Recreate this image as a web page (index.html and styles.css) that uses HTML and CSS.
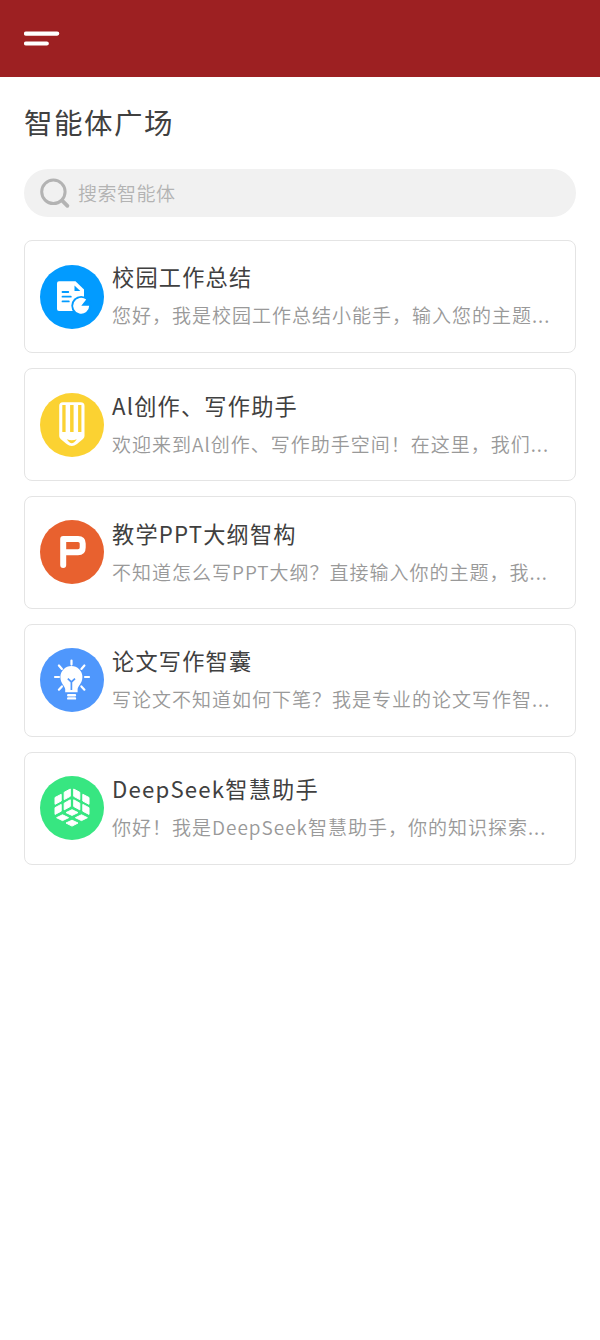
FILE: index.html
```html
<!DOCTYPE html>
<html lang="zh-CN">
<head>
<meta charset="utf-8">
<title>智能体广场</title>
<link rel="stylesheet" href="styles.css">
</head>
<body>
<header class="topbar">
  <svg class="menu" width="36" height="16" viewBox="0 0 36 16"><path d="M2 2.6H33.2M2 12.5H22.8" fill="none" stroke="#fff" stroke-width="4.2" stroke-linecap="round"/></svg>
</header>
<main class="page">
  <h1 class="heading">智能体广场</h1>
  <div class="search">
    <svg class="search-icon" width="32" height="32" viewBox="0 0 32 32"><g fill="none" stroke="#b3b3b3" stroke-width="3"><circle cx="13.4" cy="14.8" r="11.7"/><path d="M22.2 23.6l5.2 5.2" stroke-width="3.8" stroke-linecap="round"/></g></svg>
    <span class="placeholder">搜索智能体</span>
  </div>
  <section class="list">
    <article class="card">
      <svg class="icon icon-low" viewBox="0 0 64 64"><circle cx="32" cy="32" r="32" fill="#029bff"/><path d="M19 16.3H35.5L44 24.5V46H19Q17 46 17 44V18.3Q17 16.3 19 16.3Z" fill="#fff"/><path d="M34.5 20.5V26H40.3Z" fill="#029bff"/><path d="M22.5 27H28.3M22.5 31.7H30.8M22.5 36.4H28.8" stroke="#029bff" stroke-width="1.8" stroke-linecap="round"/><circle cx="41.2" cy="40.8" r="9.9" fill="#029bff"/><path d="M41.3 40.8L46.2 34.5A8 8 0 1 0 49.2 40.8Z" fill="#fff"/></svg>
      <div class="body body-high"><h2 class="title">校园工作总结</h2><p class="desc">您好，我是校园工作总结小能手，输入您的主题...</p></div>
    </article>
    <article class="card">
      <svg class="icon icon-low" viewBox="0 0 64 64"><circle cx="32" cy="32" r="32" fill="#fbd232"/><path d="M23 9.3H40.7Q44.5 9.3 44.5 13V43Q44.5 44.5 43 46L37 51Q31.8 55 26.6 51L20.6 46Q19.2 44.5 19.2 43V13Q19.2 9.3 23 9.3Z" fill="#fff"/><path d="M22.3 12h3.3v27h-3.3zM30.1 12h3.5v27h-3.5zM38.1 12h3.3v27h-3.3z" fill="#fbd232"/><path d="M26.8 46.2Q31.8 48.4 36.8 46.2Q34 50.3 31.8 50.3Q29.5 50.3 26.8 46.2Z" fill="#fbd232"/></svg>
      <div class="body body-low"><h2 class="title">Al创作、写作助手</h2><p class="desc">欢迎来到Al创作、写作助手空间！在这里，我们...</p></div>
    </article>
    <article class="card">
      <svg class="icon" viewBox="0 0 64 64"><circle cx="32" cy="32" r="32" fill="#e8612f"/><path d="M23.2 45V18.9H38Q42.7 18.9 42.7 23.6V27.4Q42.7 32.2 38 32.2H23.2" fill="none" stroke="#fff" stroke-width="6" stroke-linecap="round" stroke-linejoin="round"/></svg>
      <div class="body body-low"><h2 class="title">教学PPT大纲智构</h2><p class="desc">不知道怎么写PPT大纲？直接输入你的主题，我...</p></div>
    </article>
    <article class="card">
      <svg class="icon" viewBox="0 0 64 64"><circle cx="32" cy="32" r="32" fill="#4f97fc"/><path d="M25.2 44.3V41C24.8 38 20.4 35.5 20.4 29A11 11 0 0 1 42.4 29C42.4 35.5 38 38 37.6 41V44.3Z" fill="#fff"/><path d="M27.8 30.7l3.6 3.3 3.6-3.3M31.4 34V42" fill="none" stroke="#4f97fc" stroke-width="1.7"/><path d="M28.2 47.3h6.8M28.2 50.4h6.8" stroke="#fff" stroke-width="2.4" stroke-linecap="round"/><path d="M31.5 12.6v4M18.9 17.5l3 3.4M44.4 17.5l-3 3.4M15 29h4M45 29h4M18.9 41.7l3-3.3M44.4 41.7l-3-3.3" stroke="#fff" stroke-width="2.2" stroke-linecap="round"/></svg>
      <div class="body body-high"><h2 class="title">论文写作智囊</h2><p class="desc">写论文不知道如何下笔？我是专业的论文写作智...</p></div>
    </article>
    <article class="card">
      <svg class="icon" viewBox="0 0 64 64"><circle cx="32" cy="32" r="32" fill="#37e681"/><g fill="#fff" stroke="#fff" stroke-width="1" stroke-linejoin="round">
        <path d="M15 21.5L21.2 18.3V25L15 28.3ZM24.2 16.3L30.3 13V20.3L24.2 23.6Z"/><path d="M15 31.7L21.2 28.4V35.2L15 38.4ZM24.2 27.2L30.3 23.8V30.5L24.2 33.8Z"/>
        <path d="M33.7 13L39.8 16.3V23.6L33.7 20.3ZM42.8 18.3L49 21.5V28.3L42.8 25Z"/><path d="M33.7 23.8L39.8 27.2V33.8L33.7 30.5ZM42.8 28.4L49 31.7V38.4L42.8 35.2Z"/>
        <path d="M26 36.6L32 33.7 38 36.6 32 39.4ZM16.6 41.7L22.5 38.8 28.6 41.7 22.5 44.6ZM35.4 41.7L41.5 38.8 47.4 41.7 41.5 44.6ZM26 47L32 44.2 38 47 32 50.1Z"/></g></svg>
      <div class="body body-high"><h2 class="title">DeepSeek智慧助手</h2><p class="desc">你好！我是DeepSeek智慧助手，你的知识探索...</p></div>
    </article>
  </section>
</main>
</body>
</html>
```
FILE: styles.css
```css
* { box-sizing: border-box; }
body {
  margin: 0;
  min-height: 1340px;
  background: #fff;
  color: #404040;
  font-family: "Noto Sans CJK SC", sans-serif;
}
.topbar {
  height: 76.6px;
  padding: 31px 24px 0;
  background: #9d2022;
}
.menu { display: block; }
.page { padding: 23.4px 24px 0; }
.heading {
  margin: 0;
  height: 44px;
  line-height: 44px;
  font-size: 28.5px;
  font-weight: 400;
  letter-spacing: 1.5px;
}
.search {
  display: flex;
  align-items: center;
  height: 48px;
  margin-top: 25px;
  padding: 0 16px;
  border-radius: 24px;
  background: #f1f1f1;
}
.search-icon { flex: none; }
.placeholder {
  margin-left: 6px;
  color: #b3b3b3;
  font-size: 19px;
  font-weight: 350;
  letter-spacing: 0.5px;
  line-height: 28px;
}
.list {
  display: flex;
  flex-direction: column;
  gap: 15px;
  margin-top: 23px;
}
.card {
  display: flex;
  align-items: center;
  gap: 8px;
  height: 113px;
  padding: 0 15px;
  border: 1px solid #e4e4e4;
  border-radius: 8px;
}
.icon {
  flex: none;
  width: 64px;
  height: 64px;
}
.icon-low { margin-top: 1px; }
.body { min-width: 0; }
.body-high { padding-bottom: 2px; }
.body-low { padding-top: 0; }
.title {
  margin: 0;
  line-height: 38px;
  font-size: 22.2px;
  font-weight: 400;
  letter-spacing: 1.2px;
}
.desc {
  margin: 0;
  line-height: 39px;
  color: #999;
  font-size: 19px;
  font-weight: 350;
  letter-spacing: 1px;
  white-space: nowrap;
}
```
